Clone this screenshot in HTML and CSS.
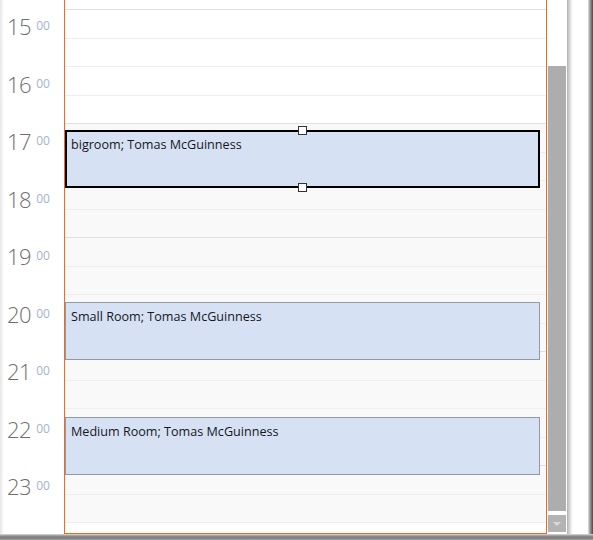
FILE: index.html
```html
<!DOCTYPE html>
<html>
<head>
<meta charset="utf-8">
<link rel="stylesheet" href="styles.css">
</head>
<body>
<div class="frame">
  <div class="top">
    <div class="window">
      <div class="gutter">
        <div class="hour"><span class="h">15</span><span class="m">00</span></div>
        <div class="hour"><span class="h">16</span><span class="m">00</span></div>
        <div class="hour"><span class="h">17</span><span class="m">00</span></div>
        <div class="hour"><span class="h">18</span><span class="m">00</span></div>
        <div class="hour"><span class="h">19</span><span class="m">00</span></div>
        <div class="hour"><span class="h">20</span><span class="m">00</span></div>
        <div class="hour"><span class="h">21</span><span class="m">00</span></div>
        <div class="hour"><span class="h">22</span><span class="m">00</span></div>
        <div class="hour"><span class="h">23</span><span class="m">00</span></div>
      </div>
      <div class="day">
        <div class="slot work first"></div>
        <div class="slot work hr"></div>
        <div class="slot work"></div>
        <div class="slot work hr"></div>
        <div class="slot off"></div>
        <div class="slot off hr"></div>
        <div class="slot off"></div>
        <div class="slot off hr"></div>
        <div class="slot off"></div>
        <div class="slot off hr"></div>
        <div class="slot off"></div>
        <div class="slot off hr"></div>
        <div class="slot off"></div>
        <div class="slot off hr"></div>
        <div class="slot off"></div>
        <div class="slot off hr"></div>
        <div class="slot off"></div>
        <div class="slot off hr"></div>
        <div class="slot work last"></div>

        <div class="event selected ev1">
          <span class="title">bigroom; Tomas McGuinness</span>
          <span class="handle htop"></span>
          <span class="handle hbot"></span>
        </div>
        <div class="event ev2"><span class="title">Small Room; Tomas McGuinness</span></div>
        <div class="event ev3"><span class="title">Medium Room; Tomas McGuinness</span></div>
      </div>
      <div class="scroll">
        <div class="track"></div>
        <div class="thumb"></div>
        <div class="gap"></div>
        <div class="btn"><span class="arrow"></span></div>
      </div>
      <div class="edge"></div>
      <div class="pad"></div>
    </div>
    <div class="rshadow"></div>
  </div>
  <div class="bshadow"></div>
</div>
</body>
</html>
```

FILE: styles.css
```css
html, body {
  margin: 0;
  padding: 0;
  background: #ffffff;
}

.frame {
  width: 593px;
  height: 540px;
  display: flex;
  flex-direction: column;
  overflow: hidden;
}

.top {
  display: flex;
  height: 534px;
}

.window {
  display: flex;
  width: 588px;
  height: 534px;
  background: #ffffff;
}

.gutter {
  width: 64px;
  flex: none;
  display: flex;
  flex-direction: column;
  padding-top: 11px;
  box-sizing: border-box;
  background: linear-gradient(to right, #e4e4e4 0px, #f4f4f4 2px, #ffffff 4px);
}

.hour {
  height: 57.5px;
  flex: none;
  display: flex;
  align-items: flex-start;
  padding-left: 7px;
  font-family: "Open Sans", "Noto Sans", sans-serif;
}

.h {
  font-size: 22px;
  font-weight: 300;
  line-height: 30px;
  color: #6e6e6e;
  letter-spacing: -0.5px;
}

.m {
  font-size: 12px;
  font-weight: 400;
  line-height: 20px;
  margin-top: 5px;
  color: #a3b4cc;
  margin-left: 5px;
  letter-spacing: 0.1px;
}

.day {
  position: relative;
  width: 483px;
  height: 534px;
  flex: none;
  box-sizing: border-box;
  border-left: 1px solid #f26a1b;
  border-right: 1px solid #f26a1b;
  border-bottom: 1px solid #f26a1b;
  padding-top: 9px;
  display: flex;
  flex-direction: column;
  background: #ffffff;
}

.slot {
  flex: none;
  height: 28px;
  border-top: 1px solid #eeeeee;
}

.slot.hr {
  height: 27px;
}

.slot.first,
.slot:nth-child(4n+1) {
  border-top-color: #e0e0e0;
}

.slot.work {
  background: #ffffff;
}

.slot.off {
  background: #f9f9f9;
}

.slot.last {
  flex: 1;
}

.event {
  position: absolute;
  left: 0;
  width: 475px;
  height: 58px;
  box-sizing: border-box;
  background: #d6e2f3;
  border: 1px solid #9199a4;
  padding: 6px 0 0 5px;
  font-family: "Open Sans", "Noto Sans", sans-serif;
  font-size: 12.6px;
  line-height: 16px;
  color: #16161e;
}

.event.selected {
  border: 2px solid #000000;
  padding: 5px 0 0 4px;
}

.ev1 { top: 130px; }
.ev2 { top: 302px; }
.ev3 { top: 417px; }

.handle {
  position: absolute;
  left: 231px;
  width: 9px;
  height: 9px;
  box-sizing: border-box;
  background: #ffffff;
  border: 1px solid #333333;
}

.htop { top: -6px; }
.hbot { bottom: -6px; }

.scroll {
  width: 20px;
  flex: none;
  display: flex;
  flex-direction: column;
  padding: 0 1px;
  box-sizing: border-box;
}

.track {
  height: 66px;
  flex: none;
}

.thumb {
  height: 445px;
  flex: none;
  background: #adadad;
}

.gap {
  height: 4px;
  flex: none;
}

.btn {
  height: 17px;
  flex: none;
  background: #b3b3b3;
  display: flex;
  align-items: center;
  justify-content: center;
}

.arrow {
  width: 0;
  height: 0;
  border-left: 4px solid transparent;
  border-right: 4px solid transparent;
  border-top: 4px solid #d9d9d9;
}

.edge {
  width: 6px;
  flex: none;
  background: linear-gradient(to right, #b0b0b0, #d4d4d4 40%, #f4f4f4 80%, #ffffff);
}

.pad {
  flex: 1;
  background: #ffffff;
}

.rshadow {
  width: 5px;
  flex: none;
  background: linear-gradient(to right, #e6e6e6, #9a9a9a 40%, #4a4a4a);
}

.bshadow {
  height: 6px;
  flex: none;
  background: linear-gradient(to bottom, #e0e0e0, #8a8a8a 35%, #7c7c7c 70%, #a8a8a8);
}
```
